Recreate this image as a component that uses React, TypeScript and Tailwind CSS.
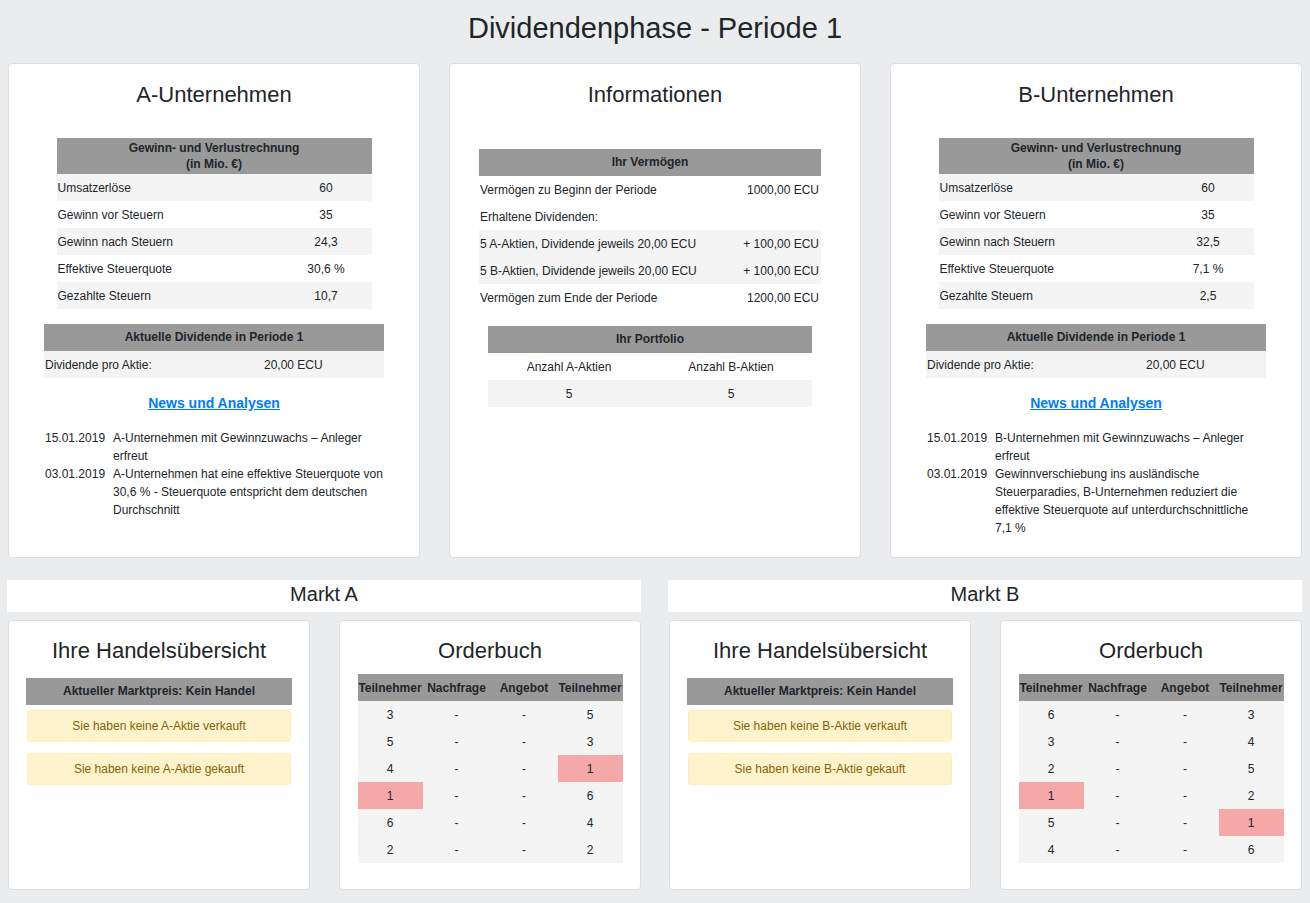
import React from "react";

const HEAD = "bg-[#999999] font-bold text-center";
const STRIPE = "bg-[#f4f4f4]";

function GuV({ rows }: { rows: [string, string][] }) {
  return (
    <div className="mx-auto w-[315px] text-[12px] mt-[29px]">
      <div className={`${HEAD} leading-[16px] py-[2px]`}>
        Gewinn- und Verlustrechnung
        <br />
        (in Mio. €)
      </div>
      {rows.map(([l, v], i) => (
        <div key={l} className={`flex h-[27px] items-center ${i % 2 === 0 ? STRIPE : ""}`}>
          <div className="w-[224px] pl-[1px]">{l}</div>
          <div className="flex-1 text-center">{v}</div>
        </div>
      ))}
    </div>
  );
}

function Dividende() {
  return (
    <div className="mx-auto w-[340px] text-[12px] mt-[15px]">
      <div className={`${HEAD} h-[27px] leading-[27px]`}>Aktuelle Dividende in Periode 1</div>
      <div className={`flex h-[27px] items-center ${STRIPE}`}>
        <div className="w-[220px] pl-[1px]">Dividende pro Aktie:</div>
        <div>20,00 ECU</div>
      </div>
    </div>
  );
}

function News({ items }: { items: [string, React.ReactNode][] }) {
  return (
    <>
      <div className="mt-[15px] text-center text-[14px] leading-[20px] font-bold text-[#007bff] underline">
        News und Analysen
      </div>
      <div className="mx-auto w-[340px] mt-[16px] text-[12px] leading-[18px]">
        {items.map(([d, t]) => (
          <div key={d} className="flex">
            <div className="w-[69px] shrink-0 pl-[1px]">{d}</div>
            <div className="whitespace-nowrap">{t}</div>
          </div>
        ))}
      </div>
    </>
  );
}

function Card({ children, className = "" }: { children: React.ReactNode; className?: string }) {
  return (
    <div className={`bg-white border border-[#dcdee1] rounded-[4px] ${className}`}>{children}</div>
  );
}

function CardTitle({ children }: { children: React.ReactNode }) {
  return <div className="text-center text-[22px] leading-[28px]">{children}</div>;
}

function Handel({ letter }: { letter: string }) {
  return (
    <Card className="h-[270px] pt-[16px]">
      <CardTitle>Ihre Handelsübersicht</CardTitle>
      <div className="mx-[17px] mt-[13px] text-[12px]">
        <div className={`${HEAD} h-[27px] leading-[27px]`}>Aktueller Marktpreis: Kein Handel</div>
        <div className="mx-[1px] mt-[5px] h-[32px] flex items-center justify-center bg-[#fff3cd] border border-[#ffeeba] rounded-[3px] text-[#856404]">
          Sie haben keine {letter}-Aktie verkauft
        </div>
        <div className="mx-[1px] mt-[11px] h-[32px] flex items-center justify-center bg-[#fff3cd] border border-[#ffeeba] rounded-[3px] text-[#856404]">
          Sie haben keine {letter}-Aktie gekauft
        </div>
      </div>
    </Card>
  );
}

function Orderbuch({ rows }: { rows: [string, string, boolean, boolean][] }) {
  return (
    <Card className="h-[270px] pt-[16px]">
      <CardTitle>Orderbuch</CardTitle>
      <div className="mx-auto mt-[9px] w-[265px] text-[12px]">
        <div className={`grid grid-cols-[65px_68px_67px_65px] ${HEAD} h-[27px] items-center`}>
          <div>Teilnehmer</div>
          <div>Nachfrage</div>
          <div>Angebot</div>
          <div>Teilnehmer</div>
        </div>
        {rows.map(([a, b, ha, hb], i) => (
          <div key={i} className={`grid grid-cols-[65px_68px_67px_65px] h-[27px] text-center ${STRIPE}`}>
            <div className={`flex items-center justify-center ${ha ? "bg-[#f4a9a8]" : ""}`}>{a}</div>
            <div className="flex items-center justify-center">-</div>
            <div className="flex items-center justify-center">-</div>
            <div className={`flex items-center justify-center ${hb ? "bg-[#f4a9a8]" : ""}`}>{b}</div>
          </div>
        ))}
      </div>
    </Card>
  );
}

function Markt({ name, letter, rows }: { name: string; letter: string; rows: [string, string, boolean, boolean][] }) {
  return (
    <div>
      <div className="bg-white h-[32px] flex items-center justify-center text-[20px] pb-[5px]">{name}</div>
      <div className="mt-[8px] grid grid-cols-[302px_302px] gap-[29px] pl-[1px]">
        <Handel letter={letter} />
        <Orderbuch rows={rows} />
      </div>
    </div>
  );
}

export default function App() {
  return (
    <div className="min-h-[903px] bg-[#ebecee] text-[#212529] font-['Liberation_Sans',Arial,sans-serif] pb-[13px]">
      <h1 className="text-center text-[29px] leading-[34px] pt-[11px] pb-[18px]">Dividendenphase - Periode 1</h1>

      <div className="grid grid-cols-3 gap-[29px] px-[8px]">
        <Card className="pt-[17px] pb-[20px]">
          <CardTitle>A-Unternehmen</CardTitle>
          <GuV
            rows={[
              ["Umsatzerlöse", "60"],
              ["Gewinn vor Steuern", "35"],
              ["Gewinn nach Steuern", "24,3"],
              ["Effektive Steuerquote", "30,6 %"],
              ["Gezahlte Steuern", "10,7"],
            ]}
          />
          <Dividende />
          <News
            items={[
              ["15.01.2019", <>A-Unternehmen mit Gewinnzuwachs – Anleger<br />erfreut</>],
              [
                "03.01.2019",
                <>A-Unternehmen hat eine effektive Steuerquote von<br />30,6 % - Steuerquote entspricht dem deutschen<br />Durchschnitt</>,
              ],
            ]}
          />
        </Card>

        <Card className="pt-[17px] pb-[20px]">
          <CardTitle>Informationen</CardTitle>
          <div className="ml-[29px] mt-[40px] w-[342px] text-[12px]">
            <div className={`${HEAD} h-[27px] leading-[27px]`}>Ihr Vermögen</div>
            {[
              ["Vermögen zu Beginn der Periode", "1000,00 ECU", false],
              ["Erhaltene Dividenden:", "", false],
              ["5 A-Aktien, Dividende jeweils 20,00 ECU", "+ 100,00 ECU", true],
              ["5 B-Aktien, Dividende jeweils 20,00 ECU", "+ 100,00 ECU", true],
              ["Vermögen zum Ende der Periode", "1200,00 ECU", false],
            ].map(([l, v, s]) => (
              <div key={l as string} className={`flex h-[27px] items-center justify-between pl-[1px] pr-[2px] ${s ? STRIPE : ""}`}>
                <div>{l}</div>
                <div>{v}</div>
              </div>
            ))}
          </div>
          <div className="ml-[38px] mt-[15px] w-[324px] text-[12px]">
            <div className={`${HEAD} h-[27px] leading-[27px]`}>Ihr Portfolio</div>
            <div className="grid grid-cols-2 h-[27px] items-center text-center">
              <div>Anzahl A-Aktien</div>
              <div>Anzahl B-Aktien</div>
            </div>
            <div className={`grid grid-cols-2 h-[27px] items-center text-center ${STRIPE}`}>
              <div>5</div>
              <div>5</div>
            </div>
          </div>
        </Card>

        <Card className="pt-[17px] pb-[20px]">
          <CardTitle>B-Unternehmen</CardTitle>
          <GuV
            rows={[
              ["Umsatzerlöse", "60"],
              ["Gewinn vor Steuern", "35"],
              ["Gewinn nach Steuern", "32,5"],
              ["Effektive Steuerquote", "7,1 %"],
              ["Gezahlte Steuern", "2,5"],
            ]}
          />
          <Dividende />
          <News
            items={[
              ["15.01.2019", <>B-Unternehmen mit Gewinnzuwachs – Anleger<br />erfreut</>],
              [
                "03.01.2019",
                <>Gewinnverschiebung ins ausländische<br />Steuerparadies, B-Unternehmen reduziert die<br />effektive Steuerquote auf unterdurchschnittliche<br />7,1 %</>,
              ],
            ]}
          />
        </Card>
      </div>

      <div className="mt-[22px] grid grid-cols-[634px_634px] gap-[27px] pl-[7px]">
        <Markt
          name="Markt A"
          letter="A"
          rows={[
            ["3", "5", false, false],
            ["5", "3", false, false],
            ["4", "1", false, true],
            ["1", "6", true, false],
            ["6", "4", false, false],
            ["2", "2", false, false],
          ]}
        />
        <Markt
          name="Markt B"
          letter="B"
          rows={[
            ["6", "3", false, false],
            ["3", "4", false, false],
            ["2", "5", false, false],
            ["1", "2", true, false],
            ["5", "1", false, true],
            ["4", "6", false, false],
          ]}
        />
      </div>
    </div>
  );
}
